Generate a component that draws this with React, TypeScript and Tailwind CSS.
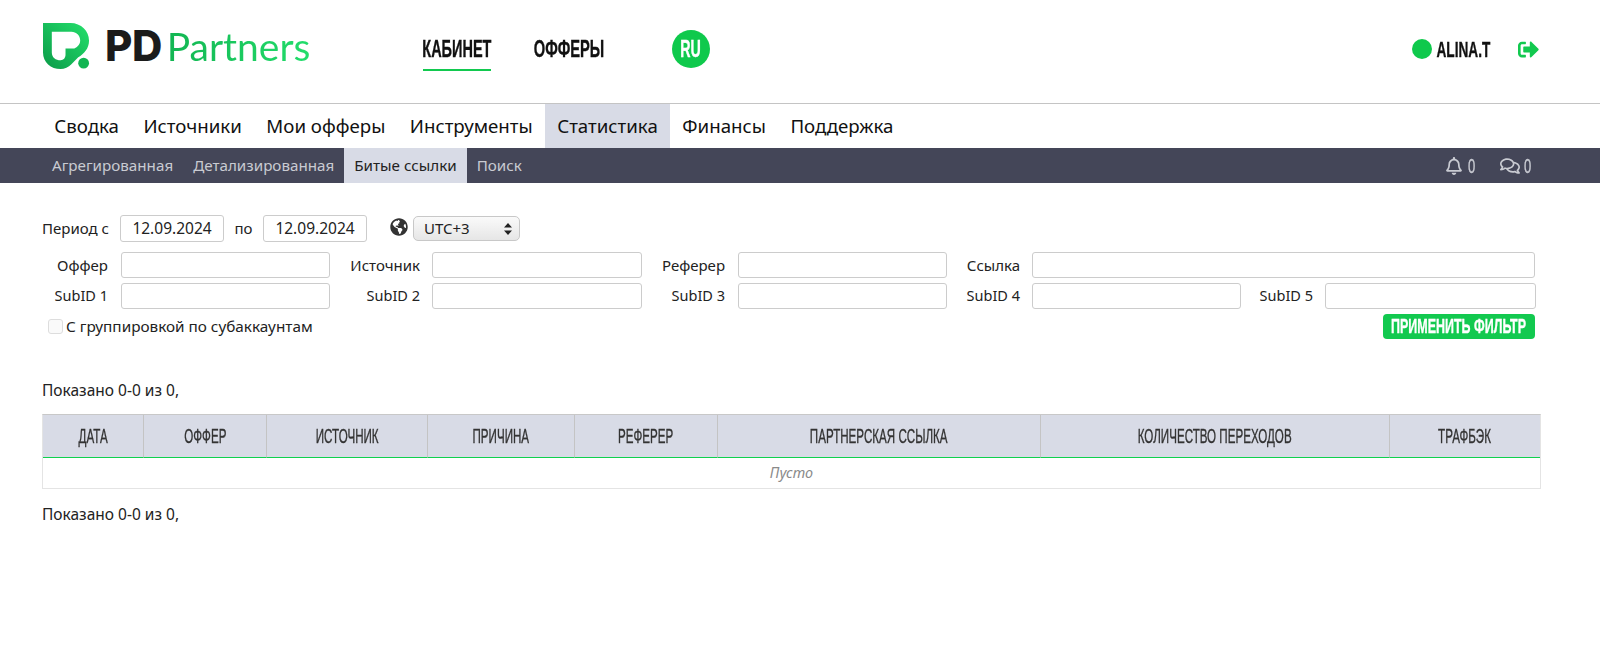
import type { ReactNode } from 'react';
import { FaRegBell, FaRegComments, FaSignOutAlt, FaGlobeAmericas } from 'react-icons/fa';

const BODY = "font-['Noto_Sans','Open_Sans',sans-serif]";
const NARROW = "font-['Liberation_Sans',sans-serif]";

const MENU = ['Сводка', 'Источники', 'Мои офферы', 'Инструменты', 'Статистика', 'Финансы', 'Поддержка'];
const SUBMENU = ['Агрегированная', 'Детализированная', 'Битые ссылки', 'Поиск'];

const COLUMNS = [
  { label: 'ДАТА', width: 'w-[101px]' },
  { label: 'ОФФЕР', width: 'w-[123px]' },
  { label: 'ИСТОЧНИК', width: 'w-[161px]' },
  { label: 'ПРИЧИНА', width: 'w-[147px]' },
  { label: 'РЕФЕРЕР', width: 'w-[143px]' },
  { label: 'ПАРТНЕРСКАЯ ССЫЛКА', width: 'w-[323px]' },
  { label: 'КОЛИЧЕСТВО ПЕРЕХОДОВ', width: 'w-[349px]' },
  { label: 'ТРАФБЭК', width: 'flex-1' },
];

// squeezed text, stands in for the condensed display face
function Cond({ w, scale, children }: { w: string; scale: string; children: ReactNode }) {
  return (
    <span className={`${w} ${NARROW} flex justify-center whitespace-nowrap [-webkit-text-stroke:0.35px_currentColor]`}>
      <span className={`shrink-0 ${scale}`}>{children}</span>
    </span>
  );
}

function Logo() {
  return (
    <div className="flex items-center w-[268px] pl-px">
      <svg width="47" height="47" viewBox="4 5 48 48" className="block shrink-0">
        <defs>
          <linearGradient id="logoGrad" x1="0" y1="1" x2="1" y2="0">
            <stop offset="0" stopColor="#0a9a48" />
            <stop offset="1" stopColor="#25e06c" />
          </linearGradient>
        </defs>
        <path
          fillRule="evenodd"
          d="M4 5 H32 C43 5 51 13 51 23 C51 31 46 36 40 40 L33 47 C30 50 26 52 22 52 C12 52 4 45 4 35 Z M13 14 V35 C13 40 17 43 22 43 C25 43 27 41 27 37 V31 H36 C40 29 42 26 42 23 C42 18 38 14 33 14 Z"
          fill="url(#logoGrad)"
        />
        <circle cx="45.5" cy="46" r="5.5" fill="#12b552" />
      </svg>
      <span className="ml-[15px] text-[42px] leading-none font-extrabold text-[#1b1b1b] font-['Inter',sans-serif] tracking-[-0.5px]">PD</span>
      <span className="ml-[5px] text-[39px] leading-none font-normal font-['Lato',sans-serif] bg-linear-to-r from-[#12b552] to-[#22dd6b] bg-clip-text text-transparent">Partners</span>
    </div>
  );
}

function Field({ label, labelW, inputW, gap = 'mr-[12px]' }: { label: string; labelW: string; inputW: string; gap?: string }) {
  const size = label.startsWith('SubID') ? 'text-[14.5px]' : 'text-[15px]';
  return (
    <div className="flex items-center">
      <span className={`${labelW} ${gap} ${size} text-right text-[#222] whitespace-nowrap`}>{label}</span>
      <div className={`${inputW} h-[26px] bg-white border border-[#cccccc] rounded-[3px]`} />
    </div>
  );
}

function DateBox({ value }: { value: string }) {
  return (
    <div className="w-[104px] h-[27px] flex items-center justify-center bg-white border border-[#cccccc] rounded-[3px] text-[15.5px] text-[#222]">
      {value}
    </div>
  );
}

function Shown() {
  return <p className="text-[15.5px] leading-[20px] text-[#222]">Показано 0-0 из 0,</p>;
}

export default function App() {
  return (
    <div className={`${BODY} min-h-[661px] bg-white`}>
      {/* Header */}
      <header className="h-[104px] border-b border-[#c4c4c4] flex items-center pl-[42px] pr-[61px] pb-[11px]">
        <Logo />
        <nav className="flex items-center ml-[113px] text-[23px] font-bold text-[#111]">
          <a className="mt-[14px] leading-[28px] pb-[6px] border-b-2 border-[#12c94f]">
            <Cond w="w-[68px]" scale="scale-x-[0.63]">КАБИНЕТ</Cond>
          </a>
          <a className="ml-[43px] mt-[6px] leading-[28px]">
            <Cond w="w-[70px]" scale="scale-x-[0.64]">ОФФЕРЫ</Cond>
          </a>
          <span className="ml-[68px] mt-[6px] w-[38px] h-[38px] rounded-full bg-[#0fc94c] text-white flex items-center justify-center">
            <Cond w="w-[19px]" scale="scale-x-[0.62]">RU</Cond>
          </span>
        </nav>
        <div className="ml-auto mt-[6px] flex items-center">
          <span className="w-[20px] h-[20px] rounded-full bg-[#0fc94c]" />
          <span className="ml-[4px] text-[22px] font-bold text-[#111]">
            <Cond w="w-[55px]" scale="scale-x-[0.62]">ALINA.T</Cond>
          </span>
          <FaSignOutAlt className="ml-[27px] text-[#12c94f]" size={21} />
        </div>
      </header>

      {/* Main menu */}
      <nav className="h-[44px] flex pl-[42px] text-[18.7px] text-[#111]">
        {MENU.map(item => (
          <a key={item} className={`px-[12.25px] flex items-center whitespace-nowrap ${item === 'Статистика' ? 'bg-[#d8dbe6]' : ''}`}>
            {item}
          </a>
        ))}
      </nav>

      {/* Sub menu */}
      <div className="h-[35px] bg-[#444658] flex pl-[42px] pr-[68px] text-[15.2px] text-[#c9cbd2]">
        {SUBMENU.map(item => (
          <a key={item} className={`px-[10px] flex items-center whitespace-nowrap ${item === 'Битые ссылки' ? 'bg-[#d8dbe6] text-[#222]' : ''}`}>
            {item}
          </a>
        ))}
        <div className="ml-auto flex items-center text-[#c9cbd2] text-[20px]">
          <FaRegBell size={18} />
          <span className="ml-[5px]"><Cond w="w-[8px]" scale="scale-x-[0.65]">0</Cond></span>
          <FaRegComments size={20} className="ml-[24px]" />
          <span className="ml-[4px]"><Cond w="w-[8px]" scale="scale-x-[0.65]">0</Cond></span>
        </div>
      </div>

      {/* Filter */}
      <section className="pl-[42px] pr-[65px] pt-[32px]">
        <div className="flex items-center h-[27px] text-[15px] text-[#222]">
          <span className="w-[78px] whitespace-nowrap">Период с</span>
          <DateBox value="12.09.2024" />
          <span className="w-[39px] text-center">по</span>
          <DateBox value="12.09.2024" />
          <FaGlobeAmericas className="ml-[23px] mb-[4px] text-[#333]" size={18} />
          <div className="ml-[5px] w-[107px] h-[25px] rounded-[5px] border border-[#c8c8c8] bg-linear-to-b from-[#fafafa] to-[#e6e6e6] flex items-center justify-between pl-[10px] pr-[7px]">
            <span>UTC+3</span>
            <svg width="8" height="12" viewBox="0 0 8 12"><path d="M4 0 L8 4.5 H0 Z M4 12 L0 7.5 H8 Z" fill="#222" /></svg>
          </div>
        </div>
        <div className="flex mt-[10px]">
          <Field label="Оффер" labelW="w-[66px]" inputW="w-[209px]" gap="mr-[13px]" />
          <div className="ml-[18px]"><Field label="Источник" labelW="w-[72px]" inputW="w-[210px]" /></div>
          <div className="ml-[18px]"><Field label="Реферер" labelW="w-[65px]" inputW="w-[209px]" gap="mr-[13px]" /></div>
          <div className="ml-[18px]"><Field label="Ссылка" labelW="w-[55px]" inputW="w-[503px]" /></div>
        </div>
        <div className="flex mt-[5px]">
          <Field label="SubID 1" labelW="w-[66px]" inputW="w-[209px]" gap="mr-[13px]" />
          <div className="ml-[18px]"><Field label="SubID 2" labelW="w-[72px]" inputW="w-[210px]" /></div>
          <div className="ml-[18px]"><Field label="SubID 3" labelW="w-[65px]" inputW="w-[209px]" gap="mr-[13px]" /></div>
          <div className="ml-[18px]"><Field label="SubID 4" labelW="w-[55px]" inputW="w-[209px]" /></div>
          <div className="ml-[17px]"><Field label="SubID 5" labelW="w-[55px]" inputW="w-[211px]" /></div>
        </div>
        <div className="flex items-center justify-between mt-[5px] h-[25px]">
          <label className="flex items-center ml-[6px] text-[15.3px] text-[#222]">
            <span className="w-[15px] h-[15px] border border-[#ddd] rounded-[3px] bg-[#fafafa]" />
            <span className="ml-[3px]">С группировкой по субаккаунтам</span>
          </label>
          <button className="w-[152px] h-[25px] rounded-[4px] bg-[#12c94f] text-white text-[19.5px] font-bold flex items-center justify-center">
            <Cond w="w-[132px]" scale="scale-x-[0.64]">ПРИМЕНИТЬ ФИЛЬТР</Cond>
          </button>
        </div>
      </section>

      {/* Table */}
      <section className="pl-[42px] pr-[59px] mt-[41px]">
        <Shown />
        <div className="mt-[14px] border border-[#e4e4e4] border-t-[#c8c8c8]">
          <div className="flex h-[43px] bg-[#d8dbe6]">
            {COLUMNS.map((col, i) => (
              <div
                key={col.label}
                className={`${col.width} flex items-center justify-center text-[20px] text-[#333] border-b border-b-[#0fd14e] ${i < COLUMNS.length - 1 ? 'border-r border-r-[#c4c4c4]' : ''}`}
              >
                <Cond w="w-[100px]" scale="scale-x-[0.58]">{col.label}</Cond>
              </div>
            ))}
          </div>
          <div className="h-[30px] flex items-center justify-center text-[14.4px] italic text-[#8a8a8a]">Пусто</div>
        </div>
        <div className="mt-[15px]"><Shown /></div>
      </section>
    </div>
  );
}
